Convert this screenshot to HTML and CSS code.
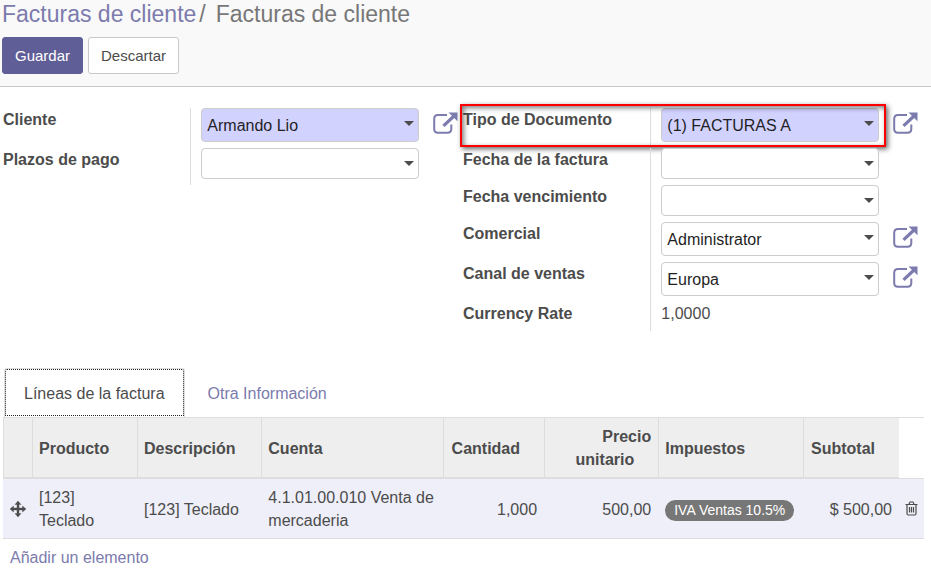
FILE: index.html
```html
<!DOCTYPE html>
<html lang="es">
<head>
<meta charset="utf-8">
<meta name="viewport" content="width=device-width, initial-scale=1">
<title>Facturas de cliente</title>
<link rel="stylesheet" href="styles.css">
</head>
<body>
<svg class="sprite" aria-hidden="true">
  <symbol id="external" viewBox="0 0 25 22">
    <path d="M14 3H5Q1.2 3 1.2 7V17Q1.2 20.8 5 20.8H14.500Q18.300 20.800 18.300 17V12.500" fill="none" stroke="currentColor" stroke-width="2"/>
    <path d="M10.500 13.800L20.500 4.500" fill="none" stroke="currentColor" stroke-width="3.200"/>
    <path d="M15.500 0.500H24.500V9.200Z" fill="currentColor"/>
  </symbol>
</svg>

<header class="control-panel">
  <nav class="breadcrumb" aria-label="Ruta">
    <a href="#">Facturas de cliente</a><span class="separator">/</span><span>Facturas de cliente</span>
  </nav>
  <div class="actions">
    <button class="btn btn-primary" type="button">Guardar</button>
    <button class="btn" type="button">Descartar</button>
  </div>
</header>

<main>
  <form class="groups">
    <div class="group">
      <div class="row">
        <label for="cliente">Cliente</label>
        <div class="field">
          <div class="select required"><select id="cliente"><option>Armando Lio</option></select></div>
          <button class="open" type="button" aria-label="Abrir cliente"><svg><use href="#external"/></svg></button>
        </div>
      </div>
      <div class="row">
        <label for="plazos">Plazos de pago</label>
        <div class="field">
          <div class="select empty"><select id="plazos"><option></option></select></div>
        </div>
      </div>
    </div>

    <div class="group">
      <div class="row highlighted">
        <label for="tipo">Tipo de Documento</label>
        <div class="field">
          <div class="select required"><select id="tipo"><option>(1) FACTURAS A</option></select></div>
          <button class="open" type="button" aria-label="Abrir tipo de documento"><svg><use href="#external"/></svg></button>
        </div>
      </div>
      <div class="row">
        <label for="fecha">Fecha de la factura</label>
        <div class="field">
          <div class="select empty"><select id="fecha"><option></option></select></div>
        </div>
      </div>
      <div class="row">
        <label for="vencimiento">Fecha vencimiento</label>
        <div class="field">
          <div class="select empty"><select id="vencimiento"><option></option></select></div>
        </div>
      </div>
      <div class="row">
        <label for="comercial">Comercial</label>
        <div class="field">
          <div class="select"><select id="comercial"><option>Administrator</option></select></div>
          <button class="open" type="button" aria-label="Abrir comercial"><svg><use href="#external"/></svg></button>
        </div>
      </div>
      <div class="row">
        <label for="canal">Canal de ventas</label>
        <div class="field">
          <div class="select"><select id="canal"><option>Europa</option></select></div>
          <button class="open" type="button" aria-label="Abrir canal de ventas"><svg><use href="#external"/></svg></button>
        </div>
      </div>
      <div class="row">
        <label for="rate">Currency Rate</label>
        <div class="field"><output id="rate">1,0000</output></div>
      </div>
    </div>
  </form>

  <section class="notebook">
    <div class="tabs" role="tablist">
      <button class="tab active" type="button" role="tab" aria-selected="true">Líneas de la factura</button>
      <button class="tab" type="button" role="tab" aria-selected="false">Otra Información</button>
    </div>
    <table class="lines">
      <colgroup>
        <col class="col-handle"><col class="col-product"><col class="col-description"><col class="col-account"><col class="col-quantity"><col class="col-price"><col class="col-taxes"><col><col class="col-delete">
      </colgroup>
      <thead>
        <tr>
          <th></th>
          <th>Producto</th>
          <th>Descripción</th>
          <th>Cuenta</th>
          <th class="number">Cantidad</th>
          <th class="number">Precio unitario</th>
          <th>Impuestos</th>
          <th class="number">Subtotal</th>
          <td class="blank"></td>
        </tr>
      </thead>
      <tbody>
        <tr class="line">
          <td class="handle">
            <svg class="move" viewBox="0 0 16 16" aria-hidden="true"><path d="M8 0L11 3.500H9V7H12.500V5L16 8L12.500 11V9H9V12.500H11L8 16L5 12.500H7V9H3.500V11L0 8L3.500 5V7H7V3.500H5Z" fill="currentColor" stroke="currentColor" stroke-width="0.400"/></svg>
          </td>
          <td>[123] Teclado</td>
          <td>[123] Teclado</td>
          <td>4.1.01.00.010 Venta de mercaderia</td>
          <td class="number">1,000</td>
          <td class="number">500,00</td>
          <td><span class="badge">IVA Ventas 10.5%</span></td>
          <td class="number">$ 500,00</td>
          <td class="delete">
            <button class="trash" type="button" aria-label="Eliminar"><svg viewBox="0 0 13 15"><path d="M0.500 3.500H12.500M4 3L5 1H8L9 3M2 3.500V12.500Q2 14 3.300 14H9.700Q11 14 11 12.500V3.500M4.500 6V11.500M6.500 6V11.500M8.500 6V11.500" fill="none" stroke="currentColor" stroke-width="1.200"/></svg></button>
          </td>
        </tr>
        <tr>
          <td colspan="9"><a href="#">Añadir un elemento</a></td>
        </tr>
      </tbody>
    </table>
  </section>
</main>
</body>
</html>
```

FILE: styles.css
```css
* {
  box-sizing: border-box;
}

body {
  margin: 0;
  background: #fff;
  color: #4c4c4c;
  font: 16px/23px "Liberation Sans", Arial, sans-serif;
}

button,
select {
  font: inherit;
}

a {
  color: #7c7bad;
  text-decoration: none;
}

.sprite {
  display: none;
}

/* Header */
.control-panel {
  padding: 0 2px 12px;
  background: #f9f9f9;
  border-bottom: 1px solid #c8c8c8;
}

.breadcrumb {
  margin-bottom: 9px;
  color: #777;
  font-size: 23px;
  line-height: 28px;
}

.separator {
  padding: 0 10px 0 3px;
}

.actions {
  display: flex;
  gap: 5px;
}

.btn {
  height: 37px;
  padding: 0 12px;
  background: #fff;
  border: 1px solid #c8c8c8;
  border-radius: 3px;
  color: #4c4c4c;
  font-size: 15px;
}

.btn-primary {
  background: #5f5e97;
  border-color: #5f5e97;
  color: #fff;
}

/* Form */
.groups {
  display: grid;
  grid-template-columns: 1fr 1fr;
  align-items: start;
  gap: 5px;
  padding: 21px 13px 0 3px;
}

.row {
  position: relative;
  display: grid;
  grid-template-columns: 7fr 10fr;
}

.row label {
  font-weight: bold;
}

.field {
  display: flex;
  align-items: flex-start;
  gap: 14px;
  padding: 0 0 6px 10px;
  border-left: 1px solid #ddd;
}

.select {
  position: relative;
  flex: 1;
  margin-right: 39px;
}

.select:not(:last-child) {
  margin-right: 0;
}

.select select {
  display: block;
  width: 100%;
  height: 34px;
  padding: 0 20px 0 5px;
  appearance: none;
  background: #fff;
  border: 1px solid #ccc;
  border-radius: 4px;
  color: #1f1f1f;
}

.select.empty select {
  height: 31px;
}

.select.required select {
  background: #d2d2ff;
}

.select::after {
  content: "";
  position: absolute;
  top: 13px;
  right: 5px;
  border: 5px solid transparent;
  border-top-color: #4c4c4c;
  border-bottom: 0;
  pointer-events: none;
}

.open {
  display: flex;
  padding: 4px 0;
  background: none;
  border: 0;
  color: #7c7bad;
}

.open svg {
  width: 25px;
  height: 22px;
}

.highlighted::after {
  content: "";
  position: absolute;
  inset: -4px 32px 1px -3px;
  border: 2px solid #f00;
  box-shadow: 2px 2px 5px rgba(0, 0, 0, 0.6), inset 2px 2px 5px rgba(0, 0, 0, 0.5);
  pointer-events: none;
}

/* Tabs and invoice lines */
.notebook {
  padding: 37px 7px 0 3px;
}

.tabs {
  display: flex;
  padding-left: 1px;
  border-bottom: 1px solid #ddd;
}

.tab {
  height: 49px;
  padding: 0 22px;
  background: none;
  border: 1px solid transparent;
  border-bottom: 0;
  color: #7c7bad;
}

.tab.active {
  padding: 0 19px;
  border-color: #ddd;
  border-radius: 3px 3px 0 0;
  color: #4c4c4c;
  outline: 1px dotted #222;
  outline-offset: -2px;
}

.lines {
  width: 100%;
  table-layout: fixed;
  border-spacing: 0;
}

.col-handle {
  width: 29px;
}

.col-product {
  width: 11.4%;
}

.col-description {
  width: 13.5%;
}

.col-account {
  width: 19.7%;
}

.col-quantity {
  width: 11%;
}

.col-price {
  width: 12.4%;
}

.col-taxes {
  width: 15.7%;
}

.col-delete {
  width: 25px;
}

.lines th,
.lines td {
  padding: 7px 7px 6px;
  text-align: left;
}

.lines th {
  padding-left: 6px;
  background: #eee;
  border-left: 1px solid #ddd;
  border-bottom: 2px solid #ddd;
}

.lines .number {
  text-align: right;
}

.lines th.number::after {
  content: "";
  display: inline-block;
  width: 17px;
}

.line td {
  background: #eeeff8;
  border-bottom: 1px solid #ddd;
}

.lines .handle,
.lines .delete,
.lines .blank {
  padding: 0;
  text-align: center;
}

.lines .blank {
  border-bottom: 1px solid #ddd;
}

.move {
  display: block;
  width: 16px;
  height: 16px;
  margin: 0 auto;
}

.trash {
  display: flex;
  margin: 0 auto;
  padding: 0;
  background: none;
  border: 0;
  color: #4c4c4c;
}

.trash svg {
  width: 13px;
  height: 15px;
}

.badge {
  display: inline-block;
  padding: 0 9px;
  background: #777;
  border-radius: 11px;
  color: #fff;
  font-size: 14px;
  line-height: 21px;
  white-space: nowrap;
}
```
